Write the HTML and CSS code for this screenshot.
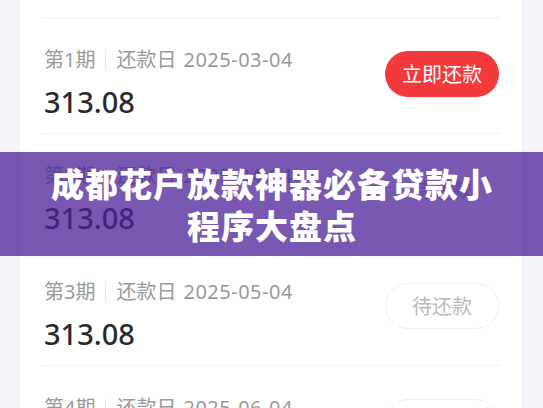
FILE: index.html
```html
<!DOCTYPE html>
<html lang="zh-CN">
<head>
<meta charset="utf-8">
<title>成都花户放款神器必备贷款小程序大盘点</title>
<link rel="stylesheet" href="styles.css">
</head>
<body>
<div class="page">
  <div class="card">
    <div class="prev"><span class="prev-text">已还款 2025-02-04</span></div>

    <div class="row">
      <div class="info">
        <div class="label"><span>第1期</span><i class="sep"></i><span>还款日</span><span class="date">2025-03-04</span></div>
        <div class="amount">313.08</div>
      </div>
      <button class="btn btn-pay">立即还款</button>
    </div>

    <div class="row">
      <div class="info">
        <div class="label"><span>第2期</span><i class="sep"></i><span>还款日</span><span class="date">2025-04-04</span></div>
        <div class="amount">313.08</div>
      </div>
      <button class="btn btn-wait">待还款</button>
    </div>

    <div class="row">
      <div class="info">
        <div class="label"><span>第3期</span><i class="sep"></i><span>还款日</span><span class="date">2025-05-04</span></div>
        <div class="amount">313.08</div>
      </div>
      <button class="btn btn-wait">待还款</button>
    </div>

    <div class="row">
      <div class="info">
        <div class="label"><span>第4期</span><i class="sep"></i><span>还款日</span><span class="date">2025-06-04</span></div>
        <div class="amount">313.08</div>
      </div>
      <button class="btn btn-wait">待还款</button>
    </div>
  </div>

  <div class="banner">
    <h1 class="title">成都花户放款神器必备贷款小<br>程序大盘点</h1>
  </div>
</div>
</body>
</html>
```

FILE: styles.css
```css
html, body {
  margin: 0;
  padding: 0;
}
body {
  background: #f3f4f9;
  font-family: "Noto Sans", "Noto Sans CJK SC", sans-serif;
  overflow: hidden;
  height: 408px;
}
.page {
  position: relative;
  height: 408px;
  padding: 0 21px 0 20px;
  overflow: hidden;
}
.card {
  background: #ffffff;
  padding: 0 22px;
}
.prev {
  height: 17px;
  overflow: hidden;
}
.prev-text {
  display: block;
  margin-top: -23px;
  font-size: 20px;
  line-height: 28px;
  color: #d6d6d6;
  padding-left: 1px;
}
.row {
  display: flex;
  align-items: flex-start;
  justify-content: space-between;
  border-top: 1px solid #f0f0f2;
  padding: 28px 1px 13px 2px;
}
.label {
  display: flex;
  align-items: center;
  font-size: 20px;
  line-height: 28px;
  color: #9a9a9a;
}
.sep {
  display: block;
  width: 1px;
  height: 19px;
  background: #e2e2e2;
  margin: 0 10px;
}
.date {
  margin-left: 7px;
  letter-spacing: 0.5px;
}
.amount {
  margin-top: 10px;
  font-size: 29px;
  line-height: 36px;
  font-weight: 500;
  color: #2a2a2c;
}
.btn {
  margin-top: 5px;
  width: 114px;
  height: 46px;
  border-radius: 23px;
  font-family: "Noto Sans CJK SC", sans-serif;
  font-size: 20px;
  line-height: 1;
  padding: 0;
  cursor: pointer;
}
.btn-pay {
  background: #f23a3c;
  border: none;
  color: #ffffff;
}
.btn-wait {
  background: #ffffff;
  border: 1px solid #efefef;
  color: #b9b9b9;
}
.banner {
  position: absolute;
  left: 0;
  right: 0;
  top: 152px;
  height: 104px;
  background: rgba(75, 32, 150, 0.75);
  display: flex;
  align-items: center;
  justify-content: center;
}
.title {
  margin: 0;
  text-align: center;
  color: #ffffff;
  font-family: "Noto Sans CJK SC", sans-serif;
  font-weight: 900;
  font-size: 33px;
  line-height: 42px;
  letter-spacing: 1px;
  padding-left: 1px;
}
```
